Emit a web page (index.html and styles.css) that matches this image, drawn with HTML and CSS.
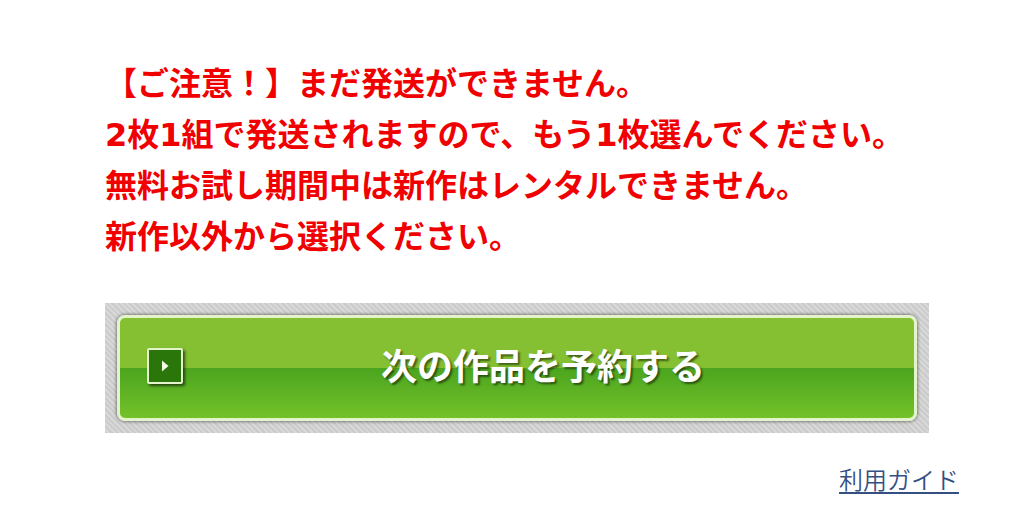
FILE: index.html
```html
<!DOCTYPE html>
<html lang="ja">
<head>
  <meta charset="UTF-8">
  <title>次の作品を予約する</title>
  <link rel="stylesheet" href="styles.css">
</head>
<body>
  <main class="container">
    <p class="notice">
      【ご注意！】まだ発送ができません。<br>
      2枚1組で発送されますので、もう1枚選んでください。<br>
      無料お試し期間中は新作はレンタルできません。<br>
      新作以外から選択ください。
    </p>
    <div class="button-area">
      <button type="button" class="reserve">
        <span class="arrow">
          <svg width="8" height="12" viewBox="0 0 8 12" aria-hidden="true">
            <path d="M1 0.5 L7.5 6 L1 11.5 Z" fill="#f4fbe9"/>
          </svg>
        </span>
        <span class="label">次の作品を予約する</span>
      </button>
    </div>
  </main>
  <div class="guide">
    <a href="#">利用ガイド</a>
  </div>
</body>
</html>
```

FILE: styles.css
```css
* {
  box-sizing: border-box;
}
body {
  margin: 0;
  background: #fff;
  font-family: "DejaVu Sans", "Noto Sans CJK JP", sans-serif;
}
.container {
  padding: 59px 86px 0 105px;
}
.notice {
  margin: 0 0 40px;
  color: #f00000;
  font-size: 32px;
  font-weight: bold;
  line-height: 51px;
}
.button-area {
  padding: 12px;
  background: repeating-linear-gradient(45deg, #cbcbcb 0, #cbcbcb 2px, #d8d8d8 2px, #d8d8d8 4px);
}
.reserve {
  display: grid;
  grid-template-columns: 36px 1fr;
  align-items: center;
  width: 100%;
  height: 106px;
  padding: 0 11px 4px 27px;
  border: 3px solid #e3f3cb;
  border-radius: 8px;
  background: linear-gradient(#84c031 0, #84c031 50%, #4ba51e 50%, #74c12a 100%);
  box-shadow: 0 0 3px 1px rgba(0, 0, 0, 0.4);
  color: #fff;
  font-family: "Noto Sans CJK JP", sans-serif;
  font-size: 36px;
  font-weight: bold;
  cursor: pointer;
}
.arrow {
  display: flex;
  align-items: center;
  justify-content: center;
  height: 36px;
  border: 2px solid #e3f3cb;
  border-radius: 2px;
  background: #2a760b;
  box-shadow: 2px 2px 3px rgba(0, 0, 0, 0.6);
}
.label {
  padding-bottom: 4px;
  line-height: 48px;
  text-shadow: 2px 2px 2px rgba(0, 0, 0, 0.5);
}
.guide {
  padding: 28px 56px 0 0;
  text-align: right;
}
.guide a {
  color: #354f82;
  font-family: "Noto Sans CJK JP", sans-serif;
  font-size: 24px;
  font-weight: 350;
  line-height: 36px;
  text-underline-offset: 3px;
  text-decoration-thickness: 2px;
}
```
